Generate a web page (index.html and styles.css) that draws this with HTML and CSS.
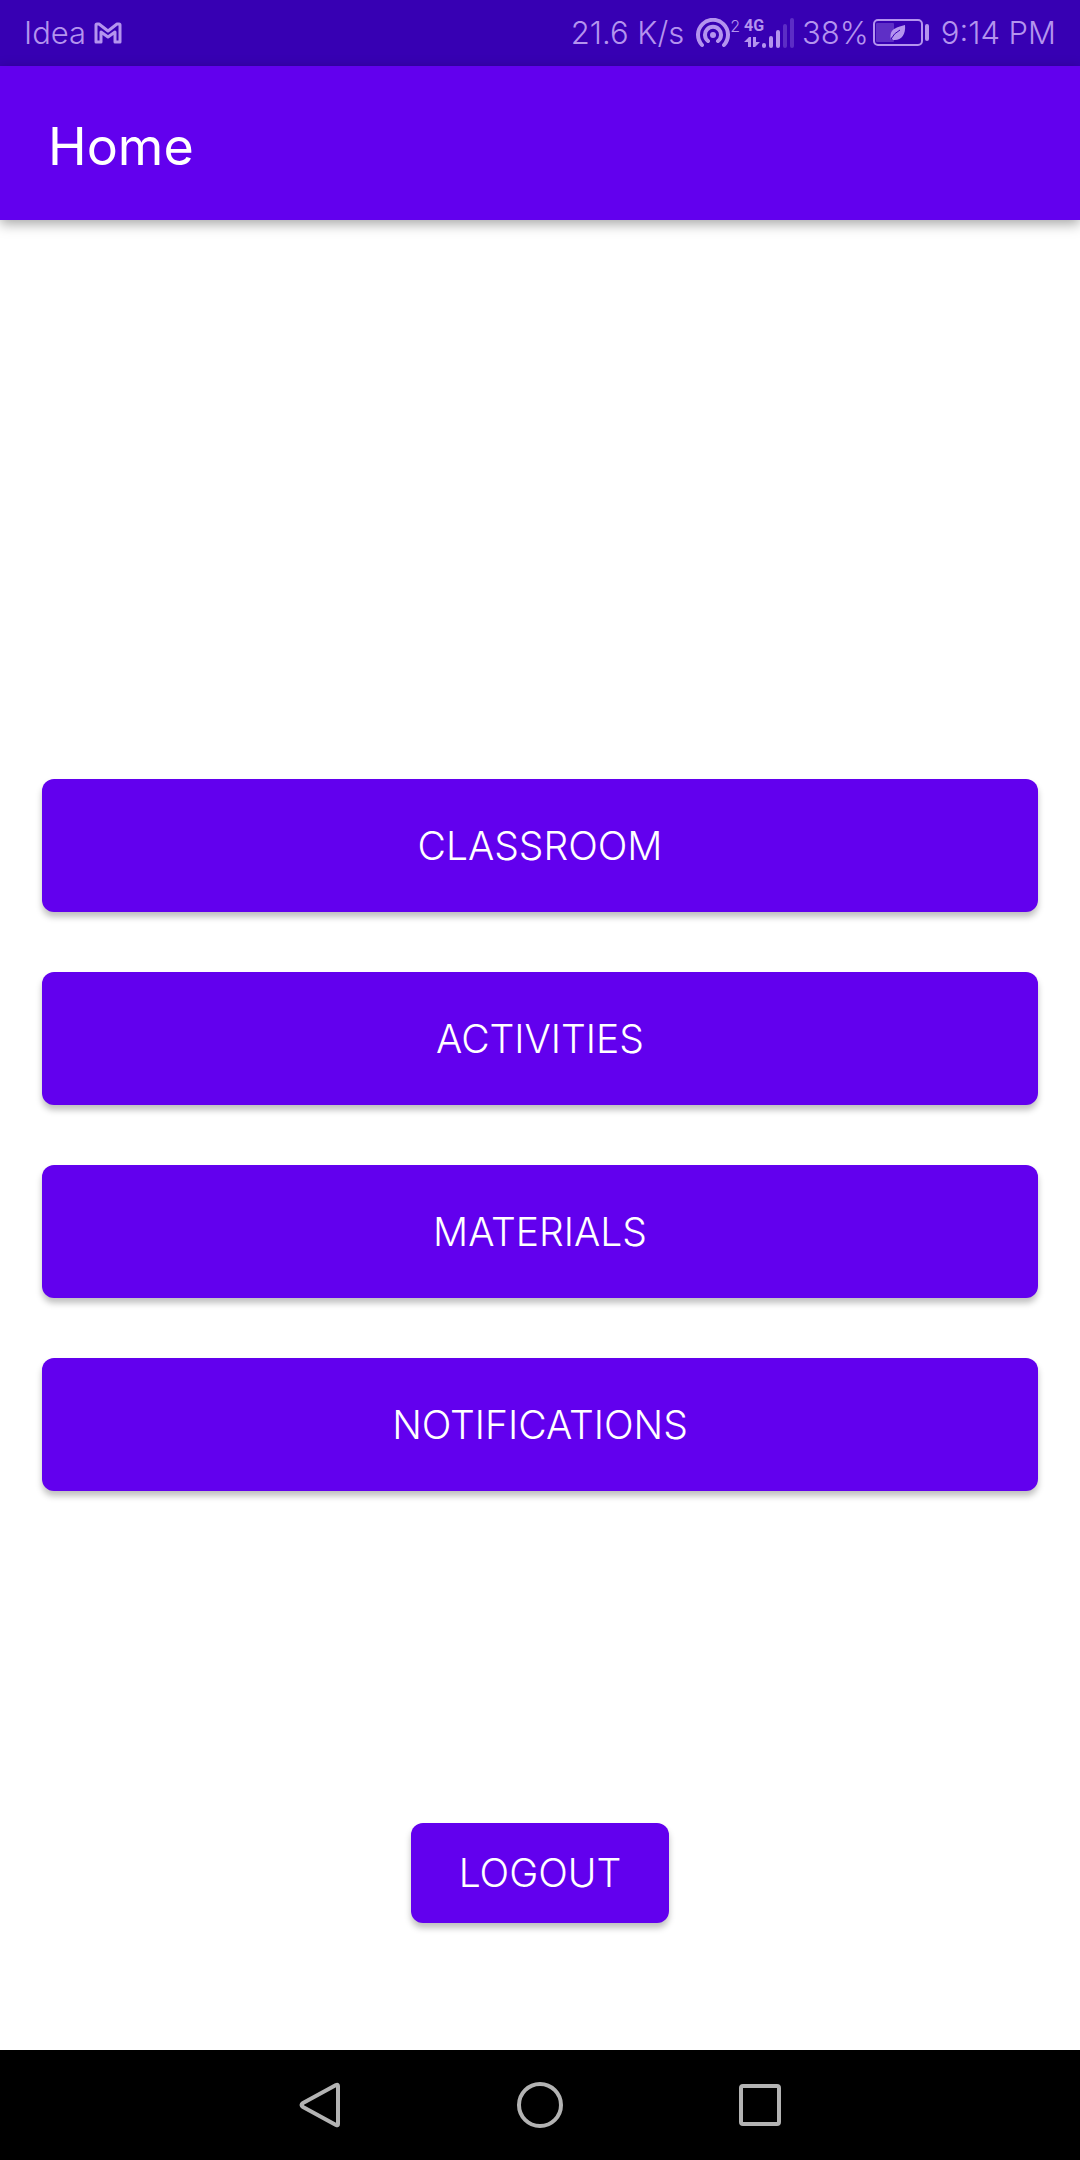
FILE: index.html
```html
<!DOCTYPE html>
<html lang="en">
<head>
<meta charset="utf-8">
<meta name="viewport" content="width=device-width, initial-scale=1">
<title>Home</title>
<link rel="stylesheet" href="styles.css">
</head>
<body class="screen">
  <div class="status-bar">
    <div class="status-group">
      <span>Idea</span>
      <svg class="icon-mail" width="28" height="22" viewBox="0 0 28 22" fill="none" stroke="currentColor" stroke-width="3" stroke-linejoin="round" aria-hidden="true"><path d="M2 3Q2 2 3 2H5L14 9L23 2H25Q26 2 26 3V20H21V10L14 15L7 10V20H2Z"/></svg>
    </div>
    <div class="status-group">
      <span class="speed">21.6 K/s</span>
      <div class="hotspot">
        <svg width="34" height="30" viewBox="0 0 34 30" fill="none" stroke="currentColor" stroke-width="4" stroke-linecap="round" aria-hidden="true"><path d="M6 27A15 15 0 1 1 28 27M12 23A8 8 0 1 1 22 23"/><circle cx="17" cy="17" r="3" fill="currentColor" stroke="none"/></svg>
        <span class="hotspot-count">2</span>
      </div>
      <div class="network">
        <div class="network-type">
          <span>4G</span>
          <svg width="16" height="12" viewBox="0 0 16 12" fill="currentColor" aria-hidden="true"><path d="M0 6L5 1H7V11H4V6ZM9 1H12V6H16L11 11H9Z"/></svg>
        </div>
        <svg class="bars" width="32" height="30" viewBox="0 0 32 30" fill="none" stroke="currentColor" stroke-width="4" stroke-linecap="round" aria-hidden="true"><path d="M2 27V28M9 20V28M16 14V28"/><path class="dim" d="M23 8V28M30 2V28"/></svg>
      </div>
      <span>38%</span>
      <svg class="battery" width="56" height="28" viewBox="0 0 56 28" aria-hidden="true"><rect class="dim-fill" x="3" y="4" width="18" height="19" rx="1"/><rect x="1" y="1" width="48" height="25" rx="4" fill="none" stroke="currentColor" stroke-width="2"/><rect x="52" y="5" width="4" height="17" rx="2" fill="currentColor"/><path d="M18 21C16 10 22 9 32 6C33 16 28 22 20 21L18 18Z" fill="currentColor"/><path d="M18 20Q21 14 27 11" fill="none" stroke="#3700b3"/></svg>
      <span>9:14 PM</span>
    </div>
  </div>

  <header class="app-bar"><h1 class="title">Home</h1></header>

  <main class="content">
    <nav class="menu" aria-label="Main">
      <button class="button" type="button">CLASSROOM</button>
      <button class="button" type="button">ACTIVITIES</button>
      <button class="button" type="button">MATERIALS</button>
      <button class="button" type="button">NOTIFICATIONS</button>
    </nav>
    <button class="button logout" type="button">LOGOUT</button>
  </main>

  <footer class="nav-bar">
    <button class="nav-key" type="button" aria-label="Back"><svg width="48" height="48" viewBox="0 0 48 48"><path d="M40 4Q42 3 42 5V43Q42 45 40 44L7 26Q4 24 7 22Z"/></svg></button>
    <button class="nav-key" type="button" aria-label="Home"><svg width="48" height="48" viewBox="0 0 48 48"><circle cx="24" cy="24" r="21"/></svg></button>
    <button class="nav-key" type="button" aria-label="Recents"><svg width="48" height="48" viewBox="0 0 48 48"><rect x="5" y="5" width="38" height="38" rx="2"/></svg></button>
  </footer>
</body>
</html>
```
FILE: styles.css
```css
* {
  box-sizing: border-box;
}

.screen {
  margin: 0;
  min-height: 100vh;
  display: flex;
  flex-direction: column;
  background: #fff;
  font-family: Inter, "Open Sans", sans-serif;
  font-weight: 300;
}

.status-bar {
  height: 66px;
  padding: 0 24px;
  display: flex;
  justify-content: space-between;
  align-items: center;
  background: #3700b3;
  color: #b494ee;
  font-size: 31px;
  line-height: 36px;
}

.status-group {
  display: flex;
  align-items: center;
  gap: 4px;
  white-space: nowrap;
}

.icon-mail {
  margin-left: 4px;
}

.speed {
  margin-right: 8px;
}

.hotspot,
.network {
  display: flex;
  height: 30px;
}

.network {
  margin-right: 4px;
}

.hotspot-count {
  font-size: 16px;
  line-height: 16px;
}

.network-type {
  width: 18px;
  display: flex;
  flex-direction: column;
  justify-content: space-between;
  font-family: Roboto, sans-serif;
  font-size: 16px;
  font-weight: 700;
  line-height: 16px;
}

.dim {
  opacity: 0.3;
}

.dim-fill {
  fill: #5e2fc6;
}

.battery {
  margin-right: 8px;
}

.app-bar {
  position: relative;
  height: 154px;
  padding: 8px 48px 0;
  display: flex;
  align-items: center;
  background: #6200ee;
  color: #fff;
  box-shadow: 0 4px 12px rgba(0, 0, 0, 0.35);
}

.title {
  margin: 0;
  font-size: 52px;
  font-weight: 400;
  line-height: 60px;
}

.content {
  flex: 1;
  padding: 0 42px;
  display: grid;
  grid-template-rows: 1fr auto 1fr;
}

.menu {
  grid-row: 2;
  display: flex;
  flex-direction: column;
  gap: 60px;
}

.button {
  height: 133px;
  padding: 0 48px;
  border: 0;
  border-radius: 12px;
  background: #6200ee;
  color: #fff;
  box-shadow: 0 5px 6px rgba(0, 0, 0, 0.25);
  font: inherit;
  font-size: 39px;
  line-height: 48px;
}

.logout {
  grid-row: 3;
  place-self: end center;
  height: 100px;
  margin-bottom: 127px;
}

.nav-bar {
  height: 110px;
  display: flex;
  justify-content: center;
  gap: 172px;
  background: #000;
}

.nav-key {
  width: 48px;
  padding: 0;
  border: 0;
  display: flex;
  align-items: center;
  background: none;
}

.nav-key svg {
  fill: none;
  stroke: #b3b3b3;
  stroke-width: 4;
  stroke-linejoin: round;
}
```
